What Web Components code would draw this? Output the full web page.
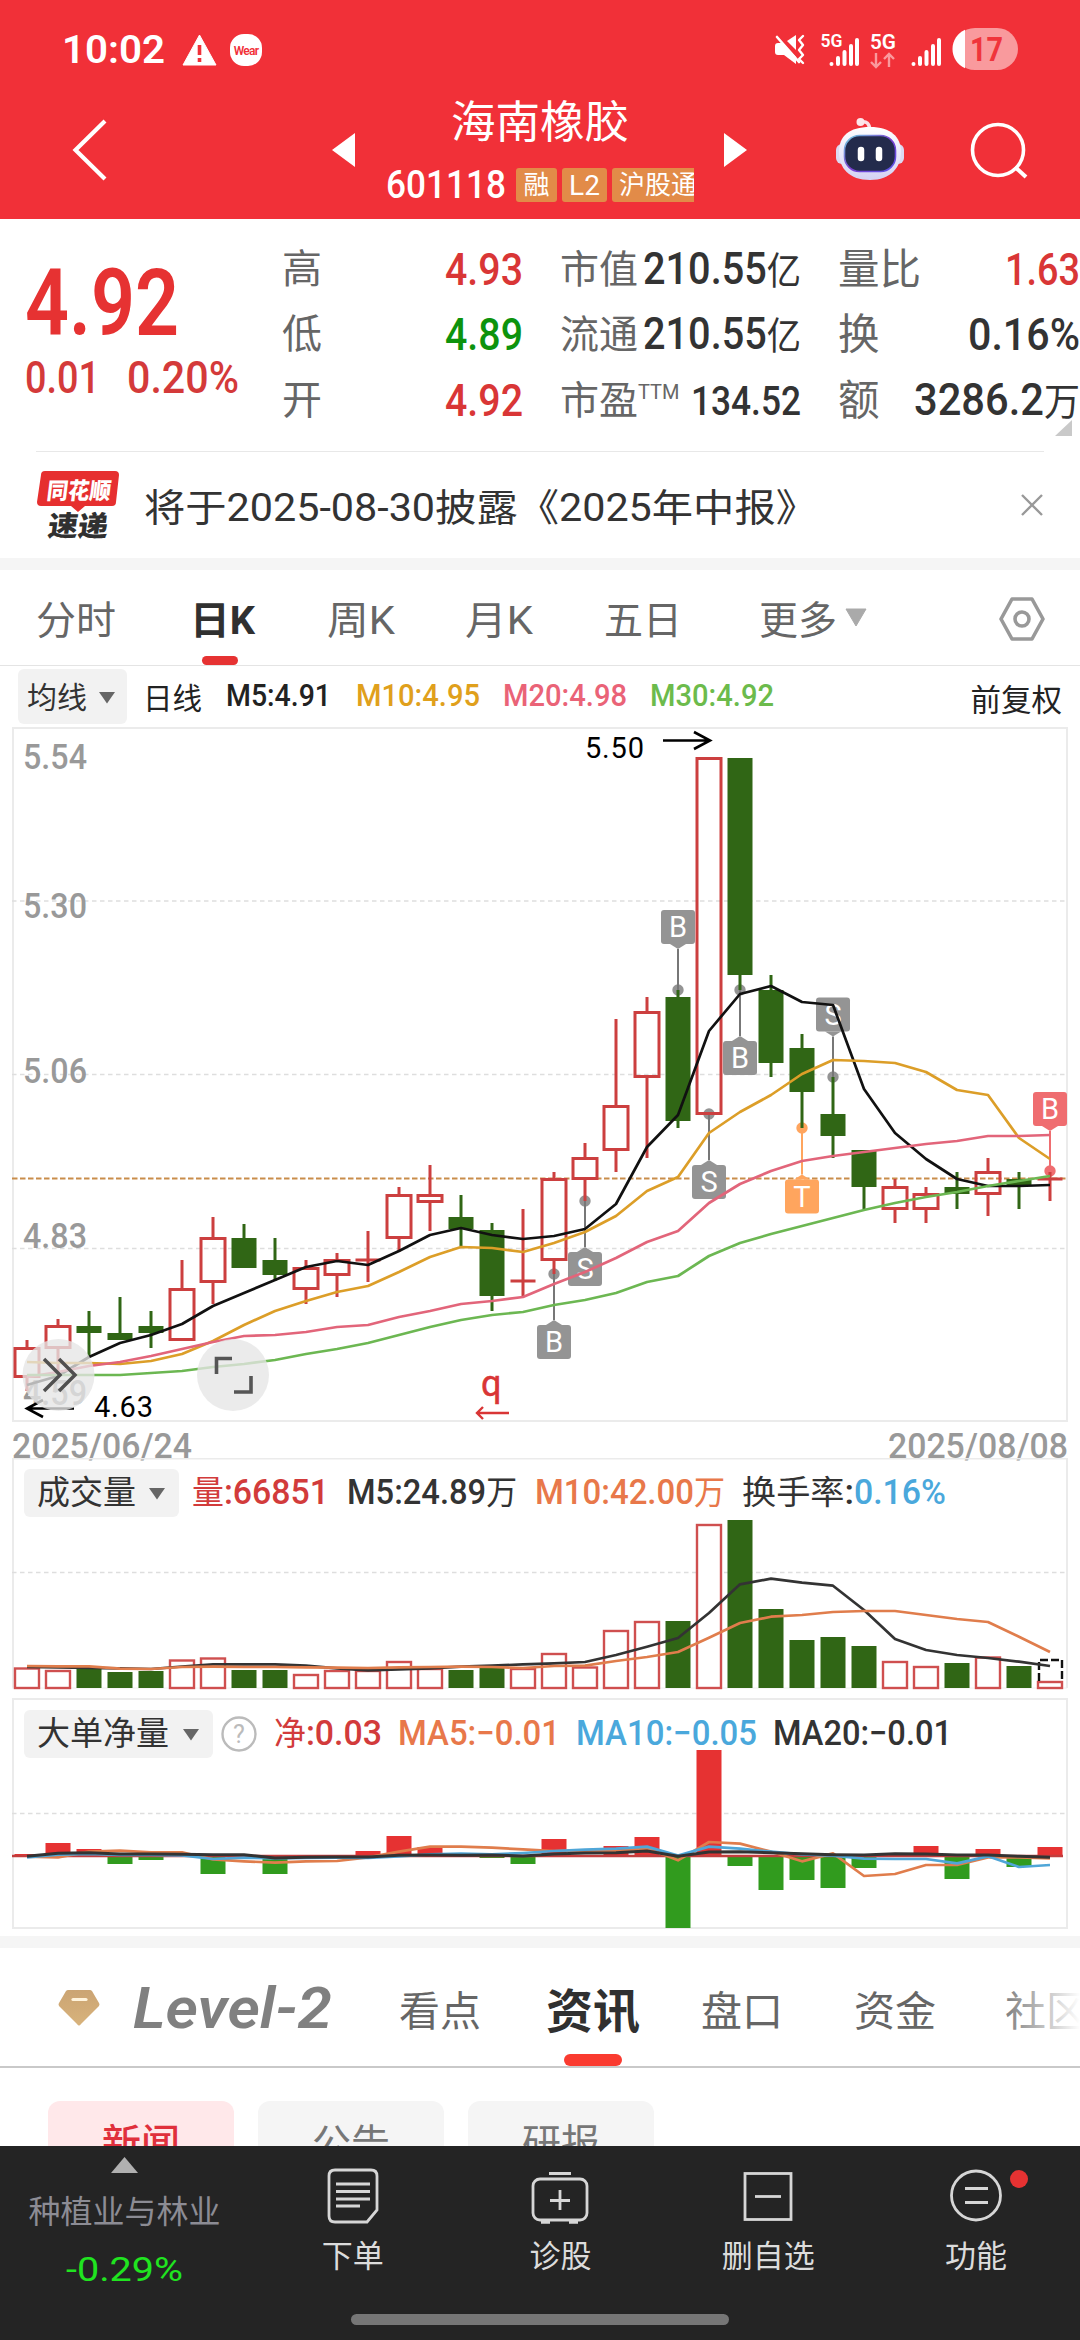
<!DOCTYPE html>
<html lang="zh-CN">
<head>
<meta charset="utf-8">
<meta name="viewport" content="width=1080">
<title>海南橡胶 601118</title>
<style>
  body {
    background-color: #fff;
    color: #333;
    font-family: Roboto, "Noto Sans CJK SC", sans-serif;
    margin: 0;
    width: 1080px;
    height: 2340px;
    overflow: hidden;
  }
</style>
</head>
<body>
<stock-app></stock-app>

<script>
(function() {
  // registers an element whose shadow root holds the given markup
  const define = (name, template) => {
    customElements.define(name, class extends HTMLElement {
      constructor() {
        super();
        const shadowRoot = this.attachShadow({ mode: 'open' });
        shadowRoot.innerHTML = template.trim();
      }
    });
  };

  const RED = '#cc3f3f';
  const GREEN = '#306615';
  const STEP = 31;
  const FIRST = 27;
  const cx = (i) => FIRST + i * STEP;

  const polyline = (values, color, width = 2.7) => {
    const points = values.map((y, i) => `${cx(i)},${y}`).join(' ');
    return `<polyline points="${points}" fill="none" stroke="${color}" stroke-width="${width}" stroke-linejoin="round"/>`;
  };

  const label = (x, y, width, size, color, text, weight = 500) =>
    `<text x="${x}" y="${y}" textLength="${width}" lengthAdjust="spacingAndGlyphs" font-size="${size}" font-weight="${weight}" fill="${color}">${text}</text>`;

  const grid = (y) => `<path d="M12 ${y}H1066" stroke="#dedede" stroke-width="1.3" stroke-dasharray="4.5 3.5"/>`;

  define('stock-app', `
    <style>
      :host { display: flex; flex-direction: column; height: 2340px; position: relative; }
      .band { background-color: #f5f5f5; flex: none; }
      bottom-nav { position: absolute; left: 0; bottom: 0; }
    </style>
    <stock-header></stock-header>
    <quote-panel></quote-panel>
    <notice-bar>将于2025-08-30披露《2025年中报》</notice-bar>
    <div class="band" style="height: 12px"></div>
    <period-tabs></period-tabs>
    <average-bar></average-bar>
    <price-chart></price-chart>
    <volume-chart></volume-chart>
    <net-chart></net-chart>
    <div class="band" style="height: 12px"></div>
    <info-tabs></info-tabs>
    <news-filter></news-filter>
    <bottom-nav></bottom-nav>
  `);

  define('status-bar', `
    <style>
      :host { display: flex; align-items: center; height: 98px; padding: 0 62px; color: #fff; }
      fit-text { font-size: 39px; font-weight: 600; margin-top: 1px; }
      .warn { margin-left: 17px; margin-top: 2px; }
      .wear {
        background-color: #fff; border-radius: 14px; color: #f13038; font-size: 12px; font-weight: 600;
        letter-spacing: -0.8px; line-height: 34px; margin-left: 13px; margin-top: 2px; text-align: center; height: 32px; width: 32px;
      }
      .right { margin-left: auto; }
    </style>
    <fit-text w="103">10:02</fit-text>
    <svg class="warn" width="35" height="32" viewBox="0 0 35 32">
      <path d="M17.5 1 34 31H1z" fill="#fff" stroke="#fff" stroke-linejoin="round"/>
      <path d="M17.5 11v10M17.5 24v4" stroke="#f13038" stroke-width="3.6"/>
    </svg>
    <div class="wear">Wear</div>
    <svg class="right" width="244" height="44" viewBox="774 27 244 44">
      <g fill="#fff">
        <path d="M775 46q0-3 3-3h5l13 14v7l-12-9h-6q-3 0-3-3z"/>
        <path d="M787 41l9-6v15z"/>
        <path d="M777 37l22 25" stroke="#fff" stroke-width="2.6" stroke-linecap="round"/>
        <path d="M803 36l-4 4 4 5-4 5 4 5-4 4 4 4" fill="none" stroke="#fff" stroke-width="2.4" stroke-linecap="round" stroke-linejoin="round"/>
      </g>
      <g stroke="#fff" stroke-width="4" stroke-linecap="round">
        <path d="M831.5 64v.1M838 58v6M844.500 52v12M851 46v18M857 40v24"/>
        <path d="M913.500 64v.1M920 58v6M926.500 52v12M933 46v18M939 40v24"/>
      </g>
      <text x="820.500" y="47" font-size="18" font-weight="600" textLength="22" lengthAdjust="spacingAndGlyphs" fill="#fff">5G</text>
      <text x="870" y="49" font-size="21" font-weight="600" textLength="26" lengthAdjust="spacingAndGlyphs" fill="#fff">5G</text>
      <path d="M876 53v14m-5-5 5 5 5-5M889 67V54m-5 5 5-5 5 5" fill="none" stroke="#fa999d" stroke-width="2.4"/>
      <rect x="954" y="28" width="64" height="42" rx="21" fill="#f99a9d"/>
      <path d="M965 29.800v38.400A21 21 0 0 1 965 29.800z" fill="#fff"/>
      <text x="970" y="61" font-size="34" font-weight="700" textLength="33" lengthAdjust="spacingAndGlyphs" fill="#f0343b">17</text>
    </svg>
  `);

  define('stock-header', `
    <style>
      :host { display: block; background-color: #f13038; height: 219px; color: #fff; }
      nav { display: flex; align-items: center; box-sizing: border-box; height: 121px; padding-bottom: 17px; }
      svg { flex: none; }
      .title { display: flex; flex-direction: column; justify-content: space-between; margin-left: 31px; width: 308px; height: 104px; }
      .name { font-size: 44.500px; line-height: 48px; text-align: center; padding-top: 1px; }
      .code { display: flex; align-items: center; gap: 5px; overflow: hidden; height: 34px; font-size: 38px; font-weight: 500; line-height: 34px; }
      .tag {
        background-color: #e28b48; border-radius: 3px; box-sizing: border-box; flex: none; font-size: 26px; font-weight: 400;
        line-height: 35px; text-align: center; height: 34px; white-space: nowrap;
      }
    </style>
    <status-bar></status-bar>
    <nav>
      <svg style="margin-left: 70px" width="40" height="64" viewBox="0 0 40 64"><path d="M35 3 5.500 32 35 61" fill="none" stroke="#fff" stroke-width="4.200"/></svg>
      <svg style="margin-left: 222px" width="23" height="34" viewBox="0 0 23 34"><path d="M23 0v34L0 17z" fill="#fff"/></svg>
      <div class="title">
        <div class="name">海南橡胶</div>
        <div class="code">
          <fit-text w="120">601118</fit-text>
          <div class="tag" style="width: 41px; margin-left: 5px">融</div>
          <div class="tag" style="width: 45px; font-size: 28px">L2</div>
          <div class="tag" style="width: 86px; padding-left: 7px; text-align: left; border-radius: 3px 0 0 3px">沪股通</div>
        </div>
      </div>
      <svg style="margin-left: 30px" width="23" height="34" viewBox="0 0 23 34"><path d="M0 0v34l23-17z" fill="#fff"/></svg>
      <svg style="margin-left: 87px" width="72" height="68" viewBox="834 116 72 68">
        <defs>
          <linearGradient id="shell" x1="0" y1="0" x2="0" y2="1"><stop offset="0" stop-color="#fff"/><stop offset="1" stop-color="#d4d2f4"/></linearGradient>
          <linearGradient id="rim" x1="0" y1="0" x2="1" y2="1"><stop offset="0" stop-color="#74d4e0"/><stop offset=".5" stop-color="#7a3fd0"/><stop offset="1" stop-color="#5a55e8"/></linearGradient>
        </defs>
        <path d="M861 122q8-2 9 8" fill="none" stroke="#fbdfe6" stroke-width="3.500"/>
        <circle cx="860.500" cy="122" r="4" fill="#fde6ea"/>
        <rect x="836" y="144" width="68" height="20" rx="6" fill="#dcd9f2"/>
        <path d="M870 127c21 0 31 10 31 25s-10 28-31 28-31-12-31-28 10-25 31-25z" fill="url(#shell)"/>
        <rect x="844.500" y="135.500" width="51" height="36" rx="15" fill="#232b4c" stroke="url(#rim)" stroke-width="1.600"/>
        <path d="M861 150v8M879 150v8" stroke="#fff" stroke-width="6.500" stroke-linecap="round"/>
      </svg>
      <svg style="margin-left: 62px" width="62" height="64" viewBox="968 118 62 64">
        <circle cx="998" cy="150" r="25.500" fill="none" stroke="#fff" stroke-width="3.600"/>
        <path d="M1015 167l11 10" stroke="#fff" stroke-width="4"/>
      </svg>
    </nav>
  `);

  define('quote-panel', `
    <style>
      :host { display: flex; box-sizing: border-box; height: 232px; padding: 18px 0 0 25px; position: relative; }
      .last { width: 257px; color: #e63232; flex: none; }
      .price { font-size: 92px; font-weight: 600; line-height: 100px; margin-top: 17px; }
      .change { display: flex; gap: 27px; color: #d43a3a; font-size: 44px; font-weight: 500; line-height: 48px; }
      .column { display: flex; flex-direction: column; width: 241px; margin-right: 37px; flex: none; }
      .column:last-of-type { width: 242px; margin-right: 0; }
      .column:last-of-type .row > span { font-size: 41.500px; }
      .row { display: flex; align-items: center; justify-content: space-between; height: 65.500px; font-size: 44px; font-weight: 500; line-height: 60px; white-space: nowrap; }
      .row > span { color: #666; font-size: 40px; font-weight: 400; }
      .narrow .row > span { font-size: 39px; }
      .row small { font-size: 38px; font-weight: 400; }
      sup { font-size: 20px; line-height: 0; vertical-align: 15px; }
      .up { color: #d93636; }
      .down { color: #0d930d; }
      .more { position: absolute; right: 8px; bottom: 15px; }
      hr { position: absolute; left: 36px; right: 36px; bottom: -1px; border: 0; border-top: 1px solid #e8e8e8; margin: 0; }
    </style>
    <div class="last">
      <div class="price"><fit-text w="154">4.92</fit-text></div>
      <div class="change"><fit-text w="75">0.01</fit-text><fit-text w="112">0.20%</fit-text></div>
    </div>
    <div class="column">
      <div class="row"><span>高</span><fit-text class="up" w="78">4.93</fit-text></div>
      <div class="row"><span>低</span><fit-text class="down" w="78">4.89</fit-text></div>
      <div class="row"><span>开</span><fit-text class="up" w="78">4.92</fit-text></div>
    </div>
    <div class="column narrow">
      <div class="row"><span>市值</span><fit-text w="158">210.55<small>亿</small></fit-text></div>
      <div class="row"><span>流通</span><fit-text w="158">210.55<small>亿</small></fit-text></div>
      <div class="row"><span>市盈<sup>TTM</sup></span><fit-text w="110" style="font-size: 41px">134.52</fit-text></div>
    </div>
    <div class="column">
      <div class="row"><span>量比</span><fit-text class="up" w="75">1.63</fit-text></div>
      <div class="row"><span>换</span><fit-text w="112">0.16%</fit-text></div>
      <div class="row"><span>额</span><fit-text w="166">3286.2<small>万</small></fit-text></div>
    </div>
    <svg class="more" width="17" height="16" viewBox="0 0 17 16"><path d="M17 0v16H0z" fill="#c9c9c9"/></svg>
    <hr>
  `);

  define('notice-bar', `
    <style>
      :host { display: flex; align-items: center; box-sizing: border-box; height: 107px; padding: 0 36px; font-size: 38px; }
      fit-text { margin-left: 24px; }
      .logo { overflow: visible; }
      .close { margin-left: auto; }
    </style>
    <svg class="logo" width="84" height="70" viewBox="36 469 84 70">
      <path d="M45 470h70q4 0 4 4l-3 27q0 4-4 4H85l-7 6-7-6H41q-4 0-4-4l4-27q0-4 4-4z" fill="#e62f2f"/>
      <g font-weight="900" font-family="'Noto Sans CJK SC'">
        <text transform="translate(46 497.500) skewX(-7)" font-size="23" textLength="64" lengthAdjust="spacingAndGlyphs" fill="#fff">同花顺</text>
        <text transform="translate(47 535) skewX(-7)" font-size="28" textLength="60" lengthAdjust="spacingAndGlyphs" fill="#303030">速递</text>
      </g>
    </svg>
    <fit-text w="673"><slot></slot></fit-text>
    <svg class="close" width="24" height="24" viewBox="0 0 24 24"><path d="M2 2l20 20M22 2 2 22" stroke="#999" stroke-width="2.400"/></svg>
  `);

  define('period-tabs', `
    <style>
      :host { display: flex; align-items: center; box-sizing: border-box; height: 96px; padding: 7px 0 0 36px; border-bottom: 1px solid #e4e4e4; color: #666; font-size: 39px; }
      .tab { flex: none; line-height: 88px; white-space: nowrap; }
      .active { color: #303030; font-weight: 700; position: relative; }
      .active::after { content: ''; position: absolute; left: 12px; bottom: 0; background-color: #e63232; border-radius: 5px; height: 9px; width: 36px; }
      .caret { margin: 0 0 7px 8px; }
      .settings { margin: 0 35px 4px auto; }
    </style>
    <fit-text class="tab" w="80">分时</fit-text>
    <fit-text class="tab active" style="margin-left: 74px" w="65">日K</fit-text>
    <fit-text class="tab" style="margin-left: 72px" w="68">周K</fit-text>
    <fit-text class="tab" style="margin-left: 70px" w="68">月K</fit-text>
    <fit-text class="tab" style="margin-left: 71px" w="78">五日</fit-text>
    <fit-text class="tab" style="margin-left: 77px" w="78">更多</fit-text>
    <svg class="caret" width="22" height="19" viewBox="0 0 22 19"><path d="M1 1h20L11 18z" fill="#aaa" stroke="#aaa" stroke-linejoin="round"/></svg>
    <svg class="settings" width="46" height="44" viewBox="0 0 46 44">
      <path d="M13 2h20l11 20-11 20H13L2 22z" fill="none" stroke="#999" stroke-width="3.600" stroke-linejoin="round"/>
      <circle cx="23" cy="22" r="7" fill="none" stroke="#999" stroke-width="3.600"/>
    </svg>
  `);

  // grey dropdown in front of each legend
  define('picker-button', `
    <style>
      :host { display: flex; align-items: center; box-sizing: border-box; background-color: #f2f2f2; border-radius: 6px; color: #333; flex: none; justify-content: space-between; padding: 0 13px; height: 48px; line-height: 44px; white-space: nowrap; }
    </style>
    <slot></slot>
    <svg width="18" height="13" viewBox="0 0 18 13"><path d="M1 1h16L9 12.500z" fill="#666"/></svg>
  `);

  define('average-bar', `
    <style>
      :host { display: flex; align-items: center; box-sizing: border-box; height: 61px; padding: 0 18px; color: #222; font-size: 32px; font-weight: 500; }
      picker-button { font-size: 30px; font-weight: 400; width: 109px; height: 55px; padding: 2px 11px 0 9px; }
      .kind { font-size: 29.500px; font-weight: 400; margin: -2px 0 0 16px; }
      fit-text { margin-top: -3px; }
      .adjust { font-size: 30.500px; font-weight: 400; margin-left: auto; padding-top: 3px; }
    </style>
    <picker-button>均线</picker-button>
    <span class="kind">日线</span>
    <fit-text style="margin-left: 24px" w="105">M5:4.91</fit-text>
    <fit-text style="margin-left: 25px; color: #e0a01c" w="124">M10:4.95</fit-text>
    <fit-text style="margin-left: 23px; color: #ea6377" w="124">M20:4.98</fit-text>
    <fit-text style="margin-left: 23px; color: #6cbb4c" w="124">M30:4.92</fit-text>
    <span class="adjust">前复权</span>
  `);

  // [rising, high, top, bottom, low]
  const candles = [
    [1, 1340, 1347, 1378, 1391], [1, 1319, 1325, 1349, 1372], [0, 1311, 1326, 1333, 1357], [0, 1297, 1333, 1340, 1340],
    [0, 1311, 1326, 1333, 1348], [1, 1260, 1288, 1341, 1341], [1, 1217, 1237, 1283, 1304], [0, 1224, 1238, 1268, 1268],
    [0, 1238, 1260, 1275, 1281], [1, 1260, 1267, 1290, 1304], [1, 1253, 1259, 1276, 1297], [1, 1231, 1260, 1260, 1282],
    [1, 1187, 1194, 1239, 1252], [1, 1165, 1194, 1203, 1231], [0, 1195, 1217, 1229, 1246], [0, 1223, 1230, 1296, 1311],
    [1, 1209, 1281, 1281, 1297], [1, 1172, 1178, 1261, 1274], [1, 1143, 1157, 1180, 1201], [1, 1019, 1105, 1151, 1172],
    [1, 997, 1011, 1078, 1158], [0, 990, 997, 1121, 1128], [1, 757, 757, 1115, 1115], [0, 758, 758, 975, 990],
    [0, 975, 990, 1063, 1077], [0, 1034, 1048, 1092, 1128], [0, 1077, 1114, 1136, 1158], [0, 1150, 1150, 1187, 1209],
    [1, 1179, 1186, 1210, 1223], [1, 1187, 1193, 1210, 1223], [0, 1172, 1187, 1194, 1209], [1, 1158, 1171, 1195, 1216],
    [0, 1172, 1179, 1185, 1209], [1, 1172, 1179, 1179, 1201]
  ];

  const m5 = [1385, 1376, 1357, 1343, 1335, 1324, 1306, 1293, 1280, 1267, 1261, 1265, 1251, 1235, 1228, 1235, 1239, 1236, 1229, 1204, 1147, 1115, 1031, 994, 986, 1002, 1005, 1089, 1133, 1159, 1179, 1186, 1186, 1185];
  const m10 = [1362, 1363, 1363, 1364, 1361, 1354, 1341, 1325, 1311, 1301, 1292, 1286, 1272, 1257, 1247, 1248, 1252, 1243, 1232, 1216, 1191, 1177, 1133, 1112, 1095, 1074, 1060, 1061, 1063, 1072, 1090, 1095, 1138, 1159];
  const m20 = [1377, 1372, 1366, 1362, 1356, 1349, 1342, 1336, 1335, 1332, 1327, 1325, 1317, 1311, 1304, 1301, 1297, 1284, 1272, 1258, 1242, 1231, 1203, 1184, 1171, 1161, 1156, 1152, 1148, 1144, 1141, 1136, 1136, 1135];
  const m30 = [1375, 1375, 1375, 1375, 1373, 1371, 1367, 1364, 1360, 1354, 1349, 1343, 1335, 1327, 1320, 1315, 1312, 1305, 1300, 1293, 1282, 1276, 1256, 1243, 1234, 1226, 1218, 1210, 1203, 1197, 1192, 1186, 1181, 1176];

  const candle = ([rising, high, top, bottom, low], i) => {
    const x = cx(i);
    if (!rising) {
      return `<path d="M${x} ${high}V${low}" stroke="${GREEN}" stroke-width="3"/><rect x="${x - 12.5}" y="${top}" width="25" height="${bottom - top}" fill="${GREEN}"/>`;
    }
    if (top === bottom) {
      return `<path d="M${x} ${high}V${low}M${x - 12.5} ${top}h25" stroke="${RED}" stroke-width="3"/>`;
    }
    return `<path d="M${x} ${high}V${top}M${x} ${bottom}V${low}" stroke="${RED}" stroke-width="3"/>
      <rect x="${x - 12}" y="${top + 1.5}" width="24" height="${bottom - top - 3}" fill="none" stroke="${RED}" stroke-width="3"/>`;
  };

  // [candle index, letter, dot y, box top, color]
  const trades = [
    [17, 'B', 1274, 1325], [18, 'S', 1201, 1252], [21, 'B', 990, 910], [22, 'S', 1114, 1165], [23, 'B', 990, 1041],
    [25, 'T', 1128, 1179.5, '#ffa55e'], [26, 'S', 1077, 997.5], [33, 'B', 1171, 1092, '#ef6d70']
  ];

  const trade = ([i, letter, dot, top, color = '#949494']) => {
    const x = cx(i);
    const below = top > dot;
    const edge = below ? top : top + 34;
    const tip = below ? top - 5 : top + 39;
    return `
      <circle cx="${x}" cy="${dot}" r="5.700" fill="${color}"/>
      <path d="M${x} ${dot}V${tip}" stroke="${color === '#949494' ? '#777' : color}" stroke-width="2"/>
      <path d="M${x - 8} ${edge}L${x} ${tip}L${x + 8} ${edge}z" fill="${color}"/>
      <rect x="${x - 17}" y="${top}" width="34" height="34" rx="3" fill="${color}"/>
      <text x="${x}" y="${top + 27}" text-anchor="middle" font-size="29" fill="#fff">${letter}</text>`;
  };

  define('price-chart', `
    <style>
      :host { display: block; height: 731px; }
      svg { display: block; overflow: visible; }
    </style>
    <svg width="1080" height="731" viewBox="0 727 1080 731">
      <rect x="13" y="728" width="1054" height="693" fill="none" stroke="#ebebeb" stroke-width="2"/>
      ${grid(901)}${grid(1074.5)}${grid(1248.5)}
      <path d="M12 1178.500H1066" stroke="#c98d4b" stroke-width="2.200" stroke-dasharray="5.500 2.500"/>
      ${label(23, 769, 64, 35, '#999', '5.54')}
      ${label(23, 918, 64, 35, '#999', '5.30')}
      ${label(23, 1083, 64, 35, '#999', '5.06')}
      ${label(23, 1248, 64, 35, '#999', '4.83')}
      ${label(23, 1405, 64, 35, '#999', '4.59')}
      ${trades.map(trade).join('')}
      ${candles.map(candle).join('')}
      ${polyline(m5, '#111')}
      ${polyline(m10, '#dc9e28')}
      ${polyline(m20, '#e2657a')}
      ${polyline(m30, '#6cb752')}
      <text x="585" y="758" textLength="59" font-size="29" fill="#000">5.50</text>
      <path d="M663 740.500h46M694 732l16 8.500-16 8.500" fill="none" stroke="#000" stroke-width="2.600"/>
      <text x="94" y="1416.500" textLength="59" font-size="29" fill="#000">4.63</text>
      <path d="M74 1408.500H28M43 1400l-16 8.500 16 8.500" fill="none" stroke="#000" stroke-width="2.600"/>
      <text x="481" y="1396" font-size="36" font-weight="400" fill="#d93535" stroke="#d93535" stroke-width=".5">q</text>
      <path d="M509 1413h-32M483 1407l-6 6 6 6" fill="none" stroke="#d93535" stroke-width="2.400"/>
      <circle cx="58.500" cy="1375" r="36" fill="#e6e6e6" fill-opacity=".78"/>
      <path d="M44 1359l16 16-16 16M59 1359l16 16-16 16" fill="none" stroke="#505050" stroke-width="3.500"/>
      <circle cx="233" cy="1375" r="36" fill="#e6e6e6" fill-opacity=".78"/>
      <path d="M216.500 1374v-15.500h15.500M251 1376v16h-17" fill="none" stroke="#555" stroke-width="3.600"/>
      ${label(12, 1458, 180, 35, '#999', '2025/06/24')}
      ${label(888, 1458, 180, 35, '#999', '2025/08/08')}
    </svg>
  `);

  // [rising, top]
  const volumes = [
    [1, 1667.5], [1, 1670], [0, 1669], [0, 1672], [0, 1671], [1, 1659.5], [1, 1657.5], [0, 1670], [0, 1670], [1, 1674], [1, 1670], [1, 1670],
    [1, 1661], [1, 1668], [0, 1670], [0, 1668], [1, 1668], [1, 1653], [1, 1666.5], [1, 1630], [1, 1621], [0, 1621], [1, 1524], [0, 1520],
    [0, 1609], [0, 1640], [0, 1637], [0, 1646], [1, 1661], [1, 1666], [0, 1663], [1, 1656.5], [0, 1666], [1, 1681]
  ];
  const v5 = [1667, 1667.5, 1668, 1668.3, 1669, 1666.5, 1664.3, 1664.3, 1664.3, 1665.7, 1668.3, 1670.3, 1669.3, 1668.3, 1666.7, 1665.7, 1664.3, 1663.3, 1662, 1655, 1646.7, 1638, 1613, 1584.3, 1578.7, 1582.7, 1585.7, 1610, 1639, 1650, 1655, 1658, 1661.7, 1666];
  const v10 = [1666, 1666.3, 1666.3, 1668.7, 1669, 1667, 1666.7, 1667, 1667, 1667.3, 1667.7, 1668, 1667.3, 1667, 1666.7, 1667, 1668, 1666, 1665.7, 1661, 1657, 1652, 1637.7, 1623, 1616.7, 1615, 1612, 1611, 1611, 1615, 1619, 1622, 1636.7, 1652];

  const volumeBar = ([rising, top], i) => rising
    ? `<rect x="${cx(i) - 12}" y="${top + 1}" width="24" height="${1687 - top}" fill="#fff" stroke="#cf4f4f" stroke-width="2.400"/>`
    : `<rect x="${cx(i) - 12.5}" y="${top}" width="25" height="${1688 - top}" fill="${GREEN}"/>`;

  // legend rows lie over the top of their own plots
  const legendStyle = `
    svg { display: block; }
    .plot { position: relative; }
    .legend { position: absolute; left: 24px; top: 11px; display: flex; align-items: center; font-size: 35px; font-weight: 500; line-height: 44px; height: 48px; white-space: nowrap; }
    .legend small { font-size: 33px; font-weight: 400; }
    picker-button { font-size: 33px; font-weight: 400; }
  `;

  define('volume-chart', `
    <style>
      :host { display: block; height: 240px; }
      ${legendStyle}
    </style>
    <div class="plot">
      <svg width="1080" height="240" viewBox="0 1458 1080 240">
        <path d="M13 1688V1458.500H1067V1688" fill="none" stroke="#ebebeb" stroke-width="2"/>
        <path d="M12 1688H1067" stroke="#f0f0f0"/>
        ${grid(1572.5)}
        ${volumes.map(volumeBar).join('')}
        <path d="M1039 1681v-21h23v21" fill="none" stroke="#111" stroke-width="2.400" stroke-dasharray="8 3"/>
        ${polyline(v5, '#333')}
        ${polyline(v10, '#e07d4c')}
      </svg>
      <div class="legend">
        <picker-button style="width: 155px">成交量</picker-button>
        <fit-text style="margin-left: 13px; color: #d23b3b" w="137"><small>量</small>:66851</fit-text>
        <fit-text style="margin-left: 18px" w="170">M5:24.89<small>万</small></fit-text>
        <fit-text style="margin-left: 18px; color: #e8784a" w="190">M10:42.00<small>万</small></fit-text>
        <fit-text style="margin-left: 17px" w="112"><small>换手率</small>:</fit-text>
        <fit-text style="color: #4aa8dc" w="92">0.16%</fit-text>
      </div>
    </div>
  `);

  // bar ends, above or below the zero line at 1856.5
  const nets = [1854, 1843, 1849, 1864, 1860, 0, 1874, 1859, 1874, 0, 0, 1851, 1836, 1847, 0, 1858, 1864, 1839, 0, 1846, 1837, 1928, 1750, 1866, 1890, 1880, 1888, 1868, 0, 1846, 1879, 1849, 1867, 1847];
  const thirds = (values) => values.map((v) => 1695 + v / 3);
  const n5 = thirds([485, 487, 470, 467, 472, 472, 493, 499, 503, 499, 498, 487, 470, 455, 455, 458, 463, 468, 466, 468, 460, 496, 441, 446, 470, 499, 475, 543, 537, 510, 510, 487, 487, 490]);
  const n10 = thirds([487, 479, 477, 480, 480, 481, 492, 488, 490, 489, 488, 489, 484, 478, 476, 478, 474, 468, 464, 461, 455, 482, 455, 461, 470, 478, 482, 491, 492, 492, 505, 484, 516, 510]);
  const n20 = thirds([484, 475, 473, 477, 477, 478, 479, 479, 489, 487, 486, 486, 481, 480, 481, 480, 483, 477, 474, 473, 468, 484, 471, 470, 473, 476, 479, 480, 476, 477, 480, 480, 484, 487]);

  const netBar = (y, i) => {
    if (!y) return '';
    return y < 1856
      ? `<rect x="${cx(i) - 12.5}" y="${y}" width="25" height="${1857 - y}" fill="#e63232"/>`
      : `<rect x="${cx(i) - 12.5}" y="1856" width="25" height="${y - 1856}" fill="#319b1e"/>`;
  };

  define('net-chart', `
    <style>
      :host { display: block; height: 238px; }
      ${legendStyle}
      .legend { top: 12px; }
      .help { margin-left: 8px; }
    </style>
    <div class="plot">
      <svg width="1080" height="238" viewBox="0 1698 1080 238">
        <rect x="13" y="1699" width="1054" height="229" fill="none" stroke="#ebebeb" stroke-width="2"/>
        ${grid(1813.5)}
        ${nets.map(netBar).join('')}
        <path d="M12 1856H1063" stroke="#c23d3d" stroke-width="2.600"/>
        ${polyline(n5, '#e07d4c')}
        ${polyline(n10, '#4fa6d8')}
        ${polyline(n20, '#333', 3)}
      </svg>
      <div class="legend">
        <picker-button style="width: 189px">大单净量</picker-button>
        <svg class="help" width="36" height="36" viewBox="0 0 36 36">
          <circle cx="18" cy="18" r="16.500" fill="none" stroke="#bbb" stroke-width="2.400"/>
          <text x="18" y="27" text-anchor="middle" font-size="25" font-weight="400" fill="#bbb">?</text>
        </svg>
        <fit-text style="margin-left: 17px; color: #d23b3b" w="108"><small>净</small>:0.03</fit-text>
        <fit-text style="margin-left: 16px; color: #e8784a" w="162">MA5:−0.01</fit-text>
        <fit-text style="margin-left: 16px; color: #4aa8dc" w="181">MA10:−0.05</fit-text>
        <fit-text style="margin-left: 16px" w="179">MA20:−0.01</fit-text>
      </div>
    </div>
  `);

  define('info-tabs', `
    <style>
      :host { display: flex; align-items: center; box-sizing: border-box; height: 120px; border-bottom: 2px solid #c9c9c9; padding: 10px 0 0 57px; color: #666; font-size: 41px; overflow: hidden; position: relative; }
      .gem { flex: none; margin-bottom: 6px; }
      .tab { flex: none; white-space: nowrap; line-height: 108px; }
      .level { color: #808080; font-size: 58px; font-style: italic; font-weight: 600; margin: -9px 0 0 32px; }
      .active { color: #303030; font-size: 47px; font-weight: 700; position: relative; margin: 0 61px 0 65px; }
      .active::after { content: ''; position: absolute; left: 18px; bottom: 0; background-color: #fa3b30; border-radius: 6px; height: 12px; width: 58px; }
      .fade { position: absolute; right: 0; top: 0; background: linear-gradient(to right, rgba(255, 255, 255, 0), #fff); height: 110px; width: 90px; }
    </style>
    <svg class="gem" width="44" height="44" viewBox="0 0 44 44">
      <defs><linearGradient id="gold" x1="0" y1="0" x2="0" y2="1"><stop offset="0" stop-color="#cba473"/><stop offset="1" stop-color="#d8b37c"/></linearGradient></defs>
      <path d="M11 3h22q1 0 2 1l7 12q1 1 0 3L24 37q-2 3-4 0L2 19q-1-2 0-3L9 4q1-1 2-1z" fill="url(#gold)"/>
      <path d="M16 12.500h13" stroke="#fff3dc" stroke-width="3.200" stroke-linecap="round"/>
    </svg>
    <fit-text class="tab level" w="199">Level-2</fit-text>
    <span class="tab" style="margin-left: 67px">看点</span>
    <span class="tab active">资讯</span>
    <span class="tab">盘口</span>
    <span class="tab" style="margin-left: 71px">资金</span>
    <span class="tab" style="margin-left: 69px">社区</span>
    <div class="fade"></div>
  `);

  define('news-filter', `
    <style>
      :host { display: flex; gap: 24px; padding: 33px 48px 0; }
      .chip { background-color: #f5f5f5; border-radius: 12px; color: #777; font-size: 39px; line-height: 86px; text-align: center; width: 186px; height: 84px; }
      .active { background-color: #ffe8ea; color: #e0303c; font-weight: 500; }
    </style>
    <div class="chip active">新闻</div>
    <div class="chip">公告</div>
    <div class="chip">研报</div>
  `);

  define('nav-item', `
    <style>
      :host { display: flex; flex-direction: column; align-items: center; color: #dcdcdc; font-size: 31px; line-height: 44px; width: 208px; padding-top: 18px; position: relative; }
      slot[name=icon] { display: block; height: 64px; }
      .label { margin-top: 7px; }
    </style>
    <slot name="icon"></slot>
    <div class="label"><slot></slot></div>
  `);

  define('bottom-nav', `
    <style>
      :host { display: flex; background-color: #242424; width: 1080px; height: 194px; }
      .sector { display: flex; flex-direction: column; align-items: center; width: 249px; color: #8c8c94; font-size: 32px; padding-top: 11px; box-sizing: border-box; }
      .sector svg { display: block; }
      .sector span { line-height: 40px; margin-top: 19px; }
      .sector b { color: #20e420; font-weight: 400; font-size: 34px; line-height: 40px; margin-top: 17px; }
      nav-item > svg { display: block; fill: none; stroke: #d6d6d6; stroke-width: 2.800; }
      .dot { position: absolute; right: 52px; top: 24px; background-color: #e63232; border-radius: 50%; height: 18px; width: 18px; }
      .home { position: absolute; left: 351px; bottom: 15px; background-color: #767676; border-radius: 6px; height: 11px; width: 378px; }
    </style>
    <div class="sector">
      <svg width="27" height="16" viewBox="0 0 27 16"><path d="M13.500 0 27 16H0z" fill="#b0b0b0"/></svg>
      <span>种植业与林业</span>
      <b><fit-text w="117">-0.29%</fit-text></b>
    </div>
    <nav-item>
      <svg slot="icon" width="52" height="62" viewBox="0 0 52 62">
        <path d="M8 6h36q6 0 6 6v34L40 58H8q-6 0-6-6V12q0-6 6-6z"/><path d="M9 20h34M9 27.500h34M9 35h34M9 42h24"/>
      </svg>
      下单
    </nav-item>
    <nav-item>
      <svg slot="icon" width="60" height="62" viewBox="0 0 60 62">
        <rect x="3" y="15" width="54" height="41" rx="7"/><path d="M19 9.500h22M30 26v20M20 36.500h20"/><path d="M11 58h9M39 58h9" stroke-width="3.500"/>
      </svg>
      诊股
    </nav-item>
    <nav-item>
      <svg slot="icon" width="50" height="62" viewBox="0 0 50 62"><rect x="2" y="9.500" width="46" height="46"/><path d="M12 32.500h26"/></svg>
      删自选
    </nav-item>
    <nav-item>
      <svg slot="icon" width="54" height="62" viewBox="0 0 54 62"><circle cx="27" cy="31.500" r="24.500"/><path d="M16 24.500h23M16 38.500h23"/></svg>
      功能
      <div class="dot"></div>
    </nav-item>
    <div class="home"></div>
  `);

  // squeezes or stretches its text to the width in the w attribute;
  // defined last, so that everything around it is already rendered when it measures
  class FitText extends HTMLElement {
    constructor() {
      super();
      const shadowRoot = this.attachShadow({ mode: 'open' });
      shadowRoot.innerHTML = `
        <style>
          :host { display: inline-block; flex: none; white-space: nowrap; }
          span { display: inline-block; transform-origin: 0 50%; }
        </style>
        <span><slot></slot></span>
      `;
    }

    connectedCallback() {
      const width = Number(this.getAttribute('w'));
      const span = this.shadowRoot.querySelector('span');
      const natural = span.getBoundingClientRect().width;
      this.style.width = width + 'px';
      if (natural) span.style.transform = `scaleX(${width / natural})`;
    }
  }

  customElements.define('fit-text', FitText);
})();
</script>
</body>
</html>
